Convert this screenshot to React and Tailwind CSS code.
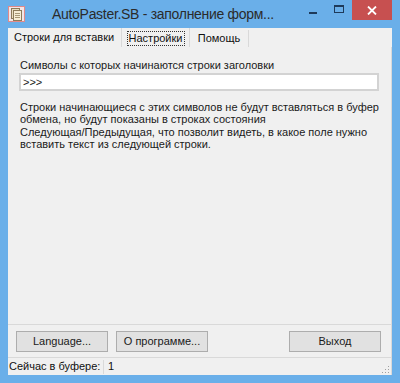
import React from "react";

const F = { fontFamily: '"Liberation Sans", Arial, sans-serif' };

function AppIcon() {
  return (
    <svg width="17" height="16" viewBox="0 0 17 16">
      <rect x="0.5" y="0.5" width="16" height="15" fill="#f3e6e6" stroke="#e08a8a" />
      <rect x="3.5" y="2.5" width="8" height="10" fill="#e9dcc0" stroke="#8c7a5a" />
      <rect x="5.5" y="4.5" width="8" height="10" fill="#f6ecd4" stroke="#8c7a5a" />
      <line x1="7" y1="7.5" x2="12" y2="7.5" stroke="#a89878" />
      <line x1="7" y1="9.5" x2="12" y2="9.5" stroke="#a89878" />
      <line x1="7" y1="11.5" x2="12" y2="11.5" stroke="#a89878" />
    </svg>
  );
}

function Btn({ children, className = "" }) {
  return (
    <div
      className={
        "h-[21px] w-[92px] flex items-center justify-center bg-[#e1e1e1] border border-[#adadad] text-[11px] text-[#1a1a1a] whitespace-nowrap " +
        className
      }
    >
      {children}
    </div>
  );
}

export default function App() {
  return (
    <div className="w-[400px] h-[383px] bg-[#6aafe9] flex flex-col overflow-hidden whitespace-nowrap" style={F}>
      {/* title bar */}
      <div className="h-[28px] flex items-start relative">
        <div className="ml-[8px] mt-[6px] shrink-0">
          <AppIcon />
        </div>
        <div className="ml-[27px] mt-[5px] text-[14px] leading-[18px] tracking-[-0.3px] text-[#2b2b2b] whitespace-nowrap">
          AutoPaster.SB - заполнение форм...
        </div>
        <div className="ml-auto flex items-start shrink-0">
          <div className="w-[26px] h-[20px] flex items-center justify-center">
            <div className="w-[8px] h-[2px] bg-[#1e3a5a] mt-[6px]" />
          </div>
          <div className="w-[26px] h-[20px] flex items-center justify-center">
            <div className="w-[10px] h-[8px] border border-[#1e3a5a] border-t-2 -mt-[3px]" />
          </div>
          <div className="w-[40px] h-[20px] bg-[#c75050] flex items-center justify-center mr-[8px]">
            <svg width="10" height="9" viewBox="0 0 10 9">
              <path d="M1 0.5 L9 8.5 M9 0.5 L1 8.5" stroke="#fff" strokeWidth="1.8" />
            </svg>
          </div>
        </div>
      </div>

      {/* client */}
      <div className="flex-1 mx-[8px] mb-[8px] bg-[#f0f0f0] flex flex-col">
        {/* tabs */}
        <div className="h-[19px] flex text-[11px] text-[#111]">
          <div className="w-[114px] pl-[6px] flex items-center border-r border-[#d9d9d9]">
            Строки для вставки
          </div>
          <div className="w-[68px] flex items-center justify-center border-r border-[#d9d9d9]">
            <div className="w-[58px] h-[15px] flex items-center justify-center border border-dotted border-[#333] mt-[2px]">
              Настройки
            </div>
          </div>
          <div className="w-[59px] flex items-center justify-center border-r border-[#d9d9d9] mt-[2px]">
            Помощь
          </div>
        </div>

        {/* panel */}
        <div className="h-[278px] border-r border-b border-[#d9d9d9] flex flex-col text-[11px] text-[#1a1a1a]">
          <div className="ml-[12px] mt-[12px] leading-[13px]">
            Символы с которых начинаются строки заголовки
          </div>
          <div className="ml-[11px] mt-[1px] w-[360px] h-[18px] bg-white border-2 border-[#d3d3d3] flex items-center pl-[2px] text-[11px]">
            &gt;&gt;&gt;
          </div>
          <div className="ml-[12px] mt-[10px] leading-[12.4px]">
            Строки начинающиеся с этих символов не будут вставляться в буфер
            <br />
            обмена, но будут показаны в строках состояния
            <br />
            Следующая/Предыдущая, что позволит видеть, в какое поле нужно
            <br />
            вставить текст из следующей строки.
          </div>
        </div>

        {/* buttons */}
        <div className="h-[32px] flex items-center pl-[8px] pr-[10px] gap-[8px] border-r border-[#d9d9d9]">
          <Btn>Language...</Btn>
          <Btn>О программе...</Btn>
          <Btn className="ml-auto">Выход</Btn>
        </div>

        {/* status bar */}
        <div className="h-[18px] border-t border-r border-[#d9d9d9] flex items-center text-[11px] text-[#111] relative">
          <div className="pl-[1px] w-[95px]">Сейчас в буфере:</div>
          <div className="w-px h-[14px] bg-[#d9d9d9]" />
          <div className="pl-[4px]">1</div>
          <svg className="absolute right-[1px] bottom-[1px]" width="9" height="9" viewBox="0 0 9 9">
            {[[7, 1], [7, 4], [4, 4], [7, 7], [4, 7], [1, 7]].map(([x, y], i) => (
              <rect key={i} x={x} y={y} width="1" height="1" fill="#a0a0a0" />
            ))}
          </svg>
        </div>
      </div>
    </div>
  );
}
